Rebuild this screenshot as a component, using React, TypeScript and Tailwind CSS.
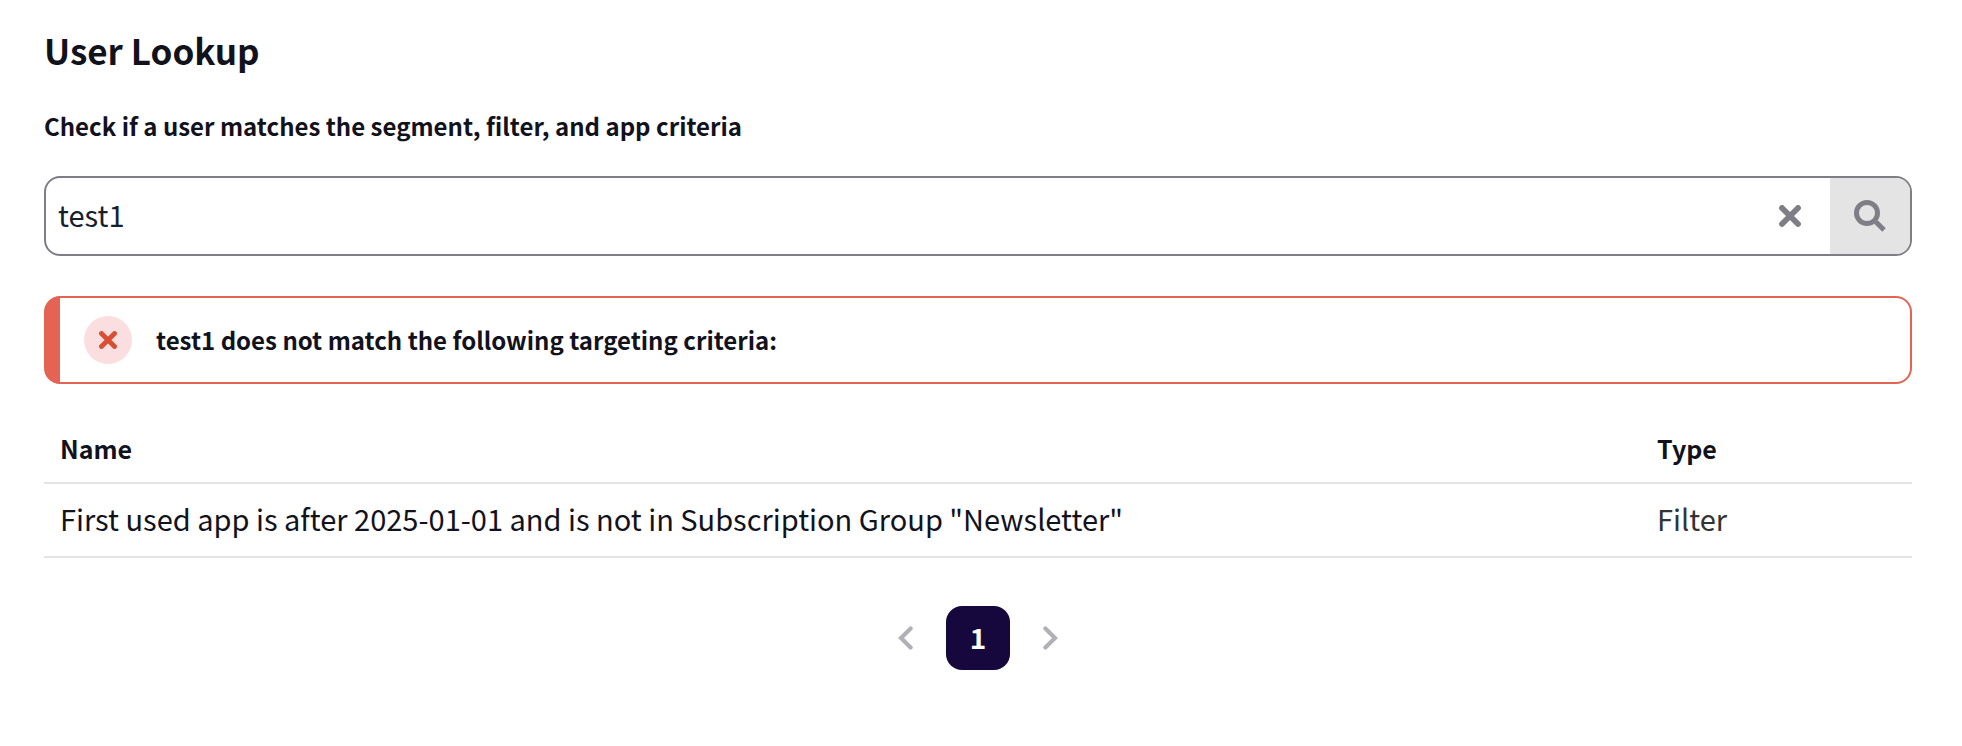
import { useState } from "react";

const rows = [
  {
    name: 'First used app is after 2025-01-01 and is not in Subscription Group "Newsletter"',
    type: "Filter",
  },
];

function CrossIcon({ className }: { className: string }) {
  return (
    <svg viewBox="0 0 22 22" className={className} fill="none" stroke="currentColor" strokeWidth="5.8" strokeLinecap="round" aria-hidden="true">
      <path d="M3 3 19 19M19 3 3 19" />
    </svg>
  );
}

function SearchIcon() {
  return (
    <svg viewBox="0 0 32 32" className="size-8" fill="none" stroke="currentColor" aria-hidden="true">
      <circle cx="13" cy="13" r="10.5" strokeWidth="5" />
      <path d="M20 20 24 24" strokeWidth="3" />
      <path d="M22 22 30 30" strokeWidth="5" strokeLinejoin="round" />
    </svg>
  );
}

function ChevronIcon({ direction }: { direction: "left" | "right" }) {
  return (
    <svg viewBox="0 0 16 24" className="h-6 w-4" fill="none" stroke="currentColor" strokeWidth="4.2" strokeLinecap="round" aria-hidden="true">
      <path d={direction === "left" ? "M12.6 2.4 3 12 12.6 21.6" : "M3.4 2.4 13 12 3.4 21.6"} />
    </svg>
  );
}

export default function App() {
  const [query, setQuery] = useState("test1");

  return (
    <main className="bg-white pt-6.5 pr-12.5 pb-19 pl-11 font-['Noto_Sans_CJK_SC','Noto_Sans',sans-serif] text-[#12121c]">
      <h1 className="text-[35px] leading-12 font-bold">User Lookup</h1>
      <label htmlFor="lookup" className="mt-8.5 block text-[24px] leading-9 font-bold">
        Check if a user matches the segment, filter, and app criteria
      </label>

      <form
        className="mt-8 flex h-20 overflow-hidden rounded-2xl border-2 border-[#7f7e86]"
        onSubmit={(event) => event.preventDefault()}
      >
        <input
          id="lookup"
          type="text"
          value={query}
          onChange={(event) => setQuery(event.target.value)}
          className="min-w-0 flex-1 px-3 pb-0.5 text-[29px] text-[#16202c] outline-none"
        />
        <button type="button" aria-label="Clear" onClick={() => setQuery("")} className="flex w-20 items-center justify-center text-[#7f7e86]">
          <CrossIcon className="size-[22px]" />
        </button>
        <button type="submit" aria-label="Search" className="flex w-20 items-center justify-center bg-[#e4e4e4] text-[#7f7e86]">
          <SearchIcon />
        </button>
      </form>

      <div role="alert" className="mt-10 flex h-22 items-center gap-6 rounded-2xl border-2 border-l-16 border-[#e56353] px-6">
        <span className="flex size-12 items-center justify-center rounded-full bg-[#fbdee0] text-[#d94f34]">
          <CrossIcon className="size-[18px]" />
        </span>
        <p className="text-[24px] leading-9 font-bold">test1 does not match the following targeting criteria:</p>
      </div>

      <table className="mt-8 w-full table-fixed text-left">
        <thead>
          <tr className="border-b-2 border-[#e4e4e4]">
            <th scope="col" className="px-4 pt-3.5 pb-4 text-[25px] leading-9 font-bold">Name</th>
            <th scope="col" className="w-[271px] px-4 pt-3.5 pb-4 text-[25px] leading-9 font-bold">Type</th>
          </tr>
        </thead>
        <tbody>
          {rows.map((row) => (
            <tr key={row.name} className="border-b-2 border-[#e4e4e4] text-[29px] leading-10">
              <td className="px-4 pt-3.5 pb-4.5">{row.name}</td>
              <td className="px-4 pt-3.5 pb-4.5 text-[#333333]">{row.type}</td>
            </tr>
          ))}
        </tbody>
      </table>

      <nav aria-label="Pagination" className="mt-12 flex items-center justify-center gap-8">
        <button type="button" aria-label="Previous page" className="text-[#b1b0b6]">
          <ChevronIcon direction="left" />
        </button>
        <button type="button" aria-current="page" className="size-16 rounded-2xl bg-[#16073d] pb-0.5 text-[28px] leading-10 font-bold text-white">
          1
        </button>
        <button type="button" aria-label="Next page" className="text-[#b1b0b6]">
          <ChevronIcon direction="right" />
        </button>
      </nav>
    </main>
  );
}
